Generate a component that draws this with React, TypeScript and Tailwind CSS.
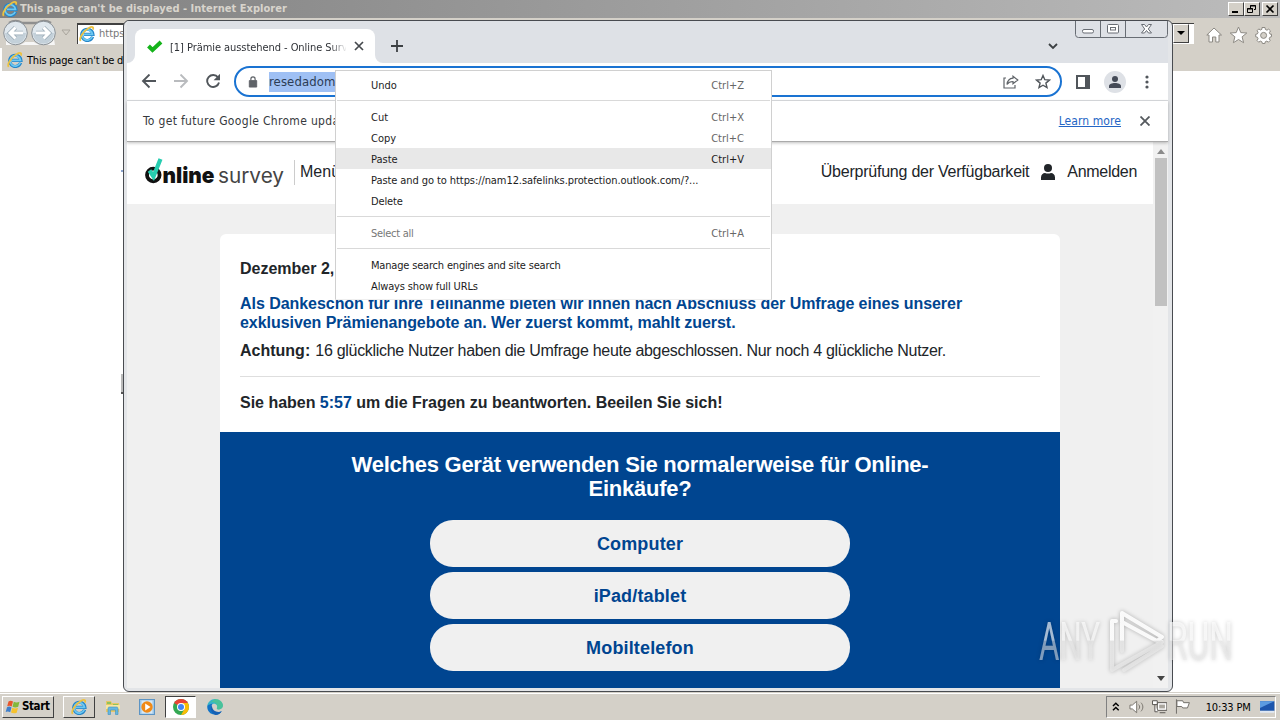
import React from 'react';

interface IconProps {
  className?: string;
}

interface MenuEntry {
  label: string;
  shortcut?: string;
  active?: boolean;
  disabled?: boolean;
  tracking?: string;
}

const MENU_GROUPS: MenuEntry[][] = [
  [{ label: 'Undo', shortcut: 'Ctrl+Z' }],
  [
    { label: 'Cut', shortcut: 'Ctrl+X' },
    { label: 'Copy', shortcut: 'Ctrl+C' },
    { label: 'Paste', shortcut: 'Ctrl+V', active: true },
    { label: 'Paste and go to https://nam12.safelinks.protection.outlook.com/?...', tracking: 'tracking-[-0.08px]' },
    { label: 'Delete', tracking: 'tracking-[-0.15px]' },
  ],
  [{ label: 'Select all', shortcut: 'Ctrl+A', disabled: true, tracking: 'tracking-[-0.28px]' }],
  [
    { label: 'Manage search engines and site search', tracking: 'tracking-[-0.18px]' },
    { label: 'Always show full URLs', tracking: 'tracking-[-0.14px]' },
  ],
];

const ANSWERS = ['Computer', 'iPad/tablet', 'Mobiltelefon'];

const IeLogo: React.FC<IconProps> = ({ className = '' }) => (
  <svg viewBox="0 0 16 16" className={className} fill="none">
    <path d="M13.6 10.8A5.6 5.6 0 1 1 13.9 8.3H5" stroke="#2585c8" strokeWidth="3.2" />
    <path d="M13.2 10.8A5.2 5.2 0 1 1 13.5 8.3H5" stroke="#6cc8f2" strokeWidth="1.8" />
    <path d="M1.7 14.8C-.3 12.5 4 5.4 9.8 2c3.6-2 5.2-.9 4 1.7" stroke="#edc240" strokeWidth="1.8" />
  </svg>
);

const ChromeLogo: React.FC<IconProps> = ({ className = '' }) => (
  <svg viewBox="0 0 16 16" className={className}>
    <circle cx="8" cy="8" r="8" fill="#34a853" />
    <path d="M8 8 1.1 4A8 8 0 0 1 14.9 4Z" fill="#ea4335" />
    <path d="M8 4h6.9A8 8 0 0 1 8 16l3.5-6Z" fill="#fbbc05" />
    <circle cx="8" cy="8" r="4" fill="#fff" />
    <circle cx="8" cy="8" r="3" fill="#4285f4" />
  </svg>
);

const EdgeLogo: React.FC<IconProps> = ({ className = '' }) => (
  <svg viewBox="0 0 16 16" className={className}>
    <path d="M.2 7.5C.5 3.2 4 0 8 0c4.500 0 8 3.200 8 6.600 0 2.300-1.800 3.900-4 3.900-1.600 0-2.600-.7-2.100-1.500.9-1.800-.2-4.200-3-4.200C3.700 4.800 1 6 .2 7.500Z" fill="#36b5c8" />
    <path d="M8 0c4.500 0 8 3.200 8 6.600 0 2.300-1.800 3.900-4 3.900-1.600 0-2.600-.7-2.100-1.500C11.500 5.400 8 2.500 4 3Z" fill="#5bd06d" opacity=".5" />
    <path d="M.2 7.500C1 5.500 3.500 4.500 6 4.800 4 6 4 9 5.500 11c2 2.500 6 2.700 9.300 1.200A8 8 0 0 1 .2 7.500Z" fill="#1273c7" />
    <path d="M5 6c-2 2.500-1.500 7.500 3.500 10 2.500 0 5-1.500 6.300-3.800C11 14 4.500 12.500 5 6Z" fill="#1560b4" />
  </svg>
);

const FolderIcon: React.FC<IconProps> = ({ className = '' }) => (
  <svg viewBox="0 0 16 16" className={className}>
    <path d="M1 2h5l1 2h7v9H1Z" fill="#e7c765" />
    <path d="M2 3h4v2H2ZM8 5h5v2H8Z" fill="#8fc35c" />
    <path d="M1 6h14v4H1Z" fill="#f7e7a2" />
    <path d="M3 15.500V9.500C3 8 4 8 5 8h6c1 0 2 0 2 1.500v6h-2.500V11h-5v4.500Z" fill="#67b7df" stroke="#3d91c0" strokeWidth=".6" />
  </svg>
);

const PlayerIcon: React.FC<IconProps> = ({ className = '' }) => (
  <svg viewBox="0 0 16 16" className={className}>
    <rect x=".5" y=".5" width="15" height="15" fill="#9cc7e8" stroke="#5c94c4" />
    <rect x="2.500" y="1.500" width="11" height="13" fill="#d6e8f5" />
    <circle cx="8" cy="8" r="5.700" fill="#f08a17" />
    <path d="M6.200 4.600 11.500 8l-5.300 3.400Z" fill="#fff" />
  </svg>
);

const WindowsFlag: React.FC<IconProps> = ({ className = '' }) => (
  <svg viewBox="0 0 16 14" className={className}>
    <path d="M3.500 1.500C5 .5 6.500.7 8 1.500L6.700 6.500C5.200 5.600 3.700 5.500 2.200 6.300Z" fill="#e8562b" />
    <path d="M8.800 1.800c1.700.8 3.500 1 5.700 0l-1.300 5c-2 .9-3.900.8-5.700 0Z" fill="#83b83b" />
    <path d="M2 7.200c1.500-.9 3-.8 4.500.2L5.200 12.300C3.700 11.300 2.200 11.200.7 12Z" fill="#3f7fcb" />
    <path d="M7.300 7.700c1.700.9 3.500 1 5.700.1l-1.300 4.900c-2 .9-3.900.8-5.700-.1Z" fill="#f6c22d" />
  </svg>
);

const IeWindow = () => (
  <div className="flex h-[692px] flex-col bg-white">
    <div className="flex h-[18px] items-center justify-between bg-gradient-to-r from-[#808080] to-[#bcbcbc] px-[2px]">
      <div className="flex items-center gap-[2px]">
        <IeLogo className="size-4" />
        <span className="pt-px text-[11px] font-bold tracking-[0.02px] text-[#d8d4cc]">This page can't be displayed - Internet Explorer</span>
      </div>
      <div className="flex">
        {['min', 'restore', 'close'].map((kind) => (
          <div
            key={kind}
            className={`flex h-[14px] w-4 items-center justify-center border border-t-white border-r-[#404040] border-b-[#404040] border-l-white bg-[#d4d0c8] ${kind === 'close' ? 'ml-[2px]' : ''}`}
          >
            <svg viewBox="0 0 12 10" className="h-[10px] w-3" fill="none" stroke="#000">
              {kind === 'min' && <path d="M2 8h6" strokeWidth="2" />}
              {kind === 'restore' && <path d="M4.500 4V1.500h5v4H8M1.500 4.500h5v4h-5ZM4 2h6M1 5h6" />}
              {kind === 'close' && <path d="m2.500 1.500 7 7m0-7-7 7" strokeWidth="1.700" />}
            </svg>
          </div>
        ))}
      </div>
    </div>
    <div className="flex h-[30px] items-center justify-between bg-[#d4d0c8] pl-[2px]">
      <div className="flex items-center">
        <svg viewBox="0 0 56 28" className="h-7 w-14" fill="none">
          <path d="M7 4C12 1 17 2 20 4h15c4-2 9-3 14 0" stroke="#8f8f8f" strokeWidth="2.500" />
          <path d="M4 20c2 6 14 8 19 3h9c6 5 18 3 20-3l1 6H4Z" fill="#f6f6f6" />
          <circle cx="13.500" cy="14" r="11.800" fill="#dfe7ed" stroke="#8a9197" />
          <circle cx="41.500" cy="14" r="11.800" fill="#dfe7ed" stroke="#8a9197" />
          <path d="M3 14a10.500 10.500 0 0 0 21 0ZM31 14a10.500 10.500 0 0 0 21 0Z" fill="#c3d0d9" />
          <path d="M21 14H7.500m6-5.500L8 14l5.500 5.500M34 14h13.500m-6-5.500L47 14l-5.500 5.500" stroke="#9aabb6" strokeWidth="4.500" />
          <path d="M21 14H7.500m6-5.500L8 14l5.500 5.500M34 14h13.500m-6-5.500L47 14l-5.500 5.500" stroke="#fff" strokeWidth="3" />
        </svg>
        <svg viewBox="0 0 10 8" className="mr-[6px] ml-[3px] h-2 w-[10px]">
          <path d="M1 1h8L5 6Z" fill="#d4d0c8" stroke="#aaa69e" />
        </svg>
        <div className="flex h-[21px] w-[120px] items-center gap-1 border-t-2 border-l border-[#404040] bg-white pl-px">
          <IeLogo className="size-4" />
          <span className="text-[11px] text-[#777]">https</span>
        </div>
      </div>
      <div className="flex items-center pr-2">
        <div className="mr-[12px] flex h-[21px] w-6 items-center border-y border-t-[#404040] border-b-white bg-white">
          <div className="ml-[3px] flex h-[19px] w-4 items-center justify-center border border-t-white border-r-[#404040] border-b-[#404040] border-l-white bg-[#d4d0c8]">
            <svg viewBox="0 0 8 4" className="h-1 w-2"><path d="M0 0h8L4 4Z" /></svg>
          </div>
        </div>
        <svg viewBox="0 0 66 18" className="mt-1 h-[18px] w-[66px]" fill="#fff" stroke="#8c8983" strokeWidth="1">
          <path d="m8 2 7.500 7H13v7H9.800v-5H6.500v5H3V9H.8ZM32.500 1l2.300 5.600 6 .4-4.700 3.800 1.500 5.900-5.100-3.200-5.100 3.200 1.500-5.900L24.200 7l6-.4Z" />
          <path d="M56 1.500h3l.4 2 1.600.7 1.700-1.100 1.800 1.800-1.100 1.700.7 1.600h1.400v2.500l-1.600.5-.7 1.600 1 1.600-1.800 1.800-1.600-1.100-1.600.7-.3 1.700h-2.500l-.5-1.700-1.500-.7-1.700 1.100-1.700-1.800 1.100-1.600-.7-1.600-1.700-.4V8.300l1.700-.4.7-1.600-1-1.600 1.700-1.800 1.600 1.100 1.500-.7Z" />
          <circle cx="57.600" cy="9.400" r="3" fill="#d4d0c8" />
        </svg>
      </div>
    </div>
    <div className="flex h-[23px] items-center gap-1 border-l-2 border-white bg-[#d4d0c8] pl-[5px]">
      <IeLogo className="size-4" />
      <span className="pt-[3px] text-[11px] tracking-[-0.22px]">This page can't be displayed</span>
    </div>
    <div className="flex flex-1 flex-col items-start pl-[121px]">
      <div className="mt-[99px] h-[2px] w-1 bg-[#8ca5d0]" />
      <div className="mt-[202px] h-5 w-1 border-b-2 border-[#555] bg-[#bbb]" />
    </div>
  </div>
);

const CaptionButtons = () => (
  <svg viewBox="0 0 94 18" className="h-[18px] w-[94px]" fill="none" stroke="#686d74">
    <path d="M.5 0v13.500a3 3 0 0 0 3 3h86a3 3 0 0 0 3-3V0M25.500 0v16M50.500 0v16" />
    <rect x="7.500" y="8.500" width="11" height="3.500" rx="1.500" fill="#fff" />
    <rect x="32.500" y="3.500" width="11" height="8.500" rx="1" fill="#fff" />
    <rect x="35.500" y="6.500" width="5" height="2.500" />
    <path d="M66.500 3.500h3l2 2.500 2-2.500h3L73.300 8l3.200 4h-3l-2-2.500-2 2.500h-3L69.700 8Z" fill="#fff" />
  </svg>
);

const TabStrip = () => (
  <div className="flex h-[42px] justify-between bg-[#dee1e6]">
    <div className="flex items-end">
      <svg viewBox="0 0 8 8" className="size-2"><path d="M8 0v8H0a8 8 0 0 0 8-8Z" fill="#fff" /></svg>
      <div className="flex h-[34px] w-[240px] items-center rounded-t-lg bg-white pl-3">
        <svg viewBox="0 0 16 14" className="h-[14px] w-4" fill="none">
          <path d="m1.500 7 4 4L14 3" stroke="#15b31b" strokeWidth="4" />
        </svg>
        <div className="ml-[7px] w-[176px] overflow-hidden whitespace-nowrap [mask-image:linear-gradient(to_right,black_160px,transparent_177px)]">
          <span className="text-[11px] tracking-[-0.06px] text-[#303338]">[1] Prämie ausstehend - Online Survey</span>
        </div>
        <svg viewBox="0 0 10 10" className="ml-2 size-[10px]" stroke="#45494d" strokeWidth="1.700"><path d="m1 1 8 8m0-8L1 9" /></svg>
      </div>
      <svg viewBox="0 0 8 8" className="size-2"><path d="M0 0v8h8a8 8 0 0 1-8-8Z" fill="#fff" /></svg>
      <svg viewBox="0 0 12 12" className="mb-[11px] ml-2 size-3" stroke="#3c4043" strokeWidth="1.800"><path d="M6 0v12M0 6h12" /></svg>
    </div>
    <div className="-mr-px flex">
      <svg viewBox="0 0 10 7" className="mt-[22px] mr-[17px] h-[7px] w-[10px]" fill="none" stroke="#3c4043" strokeWidth="1.800"><path d="m1 1 4 4 4-4" /></svg>
      <CaptionButtons />
    </div>
  </div>
);

const AddressBar = () => (
  <div className="flex h-[38px] items-center border-b border-[#dcdee1] bg-white pl-[14px]">
    <svg viewBox="0 0 16 16" className="size-4" fill="none" stroke="#51565b" strokeWidth="1.900"><path d="M15 7H2m6.500-6.500L2 7l6.500 6.500" /></svg>
    <svg viewBox="0 0 16 16" className="ml-4 size-4" fill="none" stroke="#b9bbbe" strokeWidth="1.900"><path d="M1 7h13M7.500.5 14 7l-6.500 6.500" /></svg>
    <svg viewBox="0 1 16 16" className="ml-4 size-4" fill="none" stroke="#51565b" strokeWidth="1.900">
      <path d="M13 4.400A6 6 0 1 0 14 9.500" />
      <path d="M15 .8v6.400H8.600Z" fill="#51565b" stroke="none" />
    </svg>
    <div className="ml-[13px] flex h-[31px] w-[828px] items-center rounded-full border-2 border-[#1a73d2] bg-white pr-[9px] pl-3">
      <svg viewBox="0 0 10 13" className="h-3 w-[10px]"><path d="M1 5h8v7H1Z" fill="#5f6368" stroke="#5f6368" strokeLinejoin="round" /><path d="M2.700 5V3.200a2.300 2.300 0 0 1 4.600 0V5" fill="none" stroke="#5f6368" strokeWidth="1.300" /></svg>
      <span className="ml-[11px] h-5 bg-[#9fc0f4] text-[13px] leading-5 tracking-[0.1px] text-[#2c3c55]">resedadomain</span>
      <div className="ml-auto flex items-center gap-4">
        <svg viewBox="0 0 16 14" className="h-[14px] w-4" fill="none" stroke="#5f6368" strokeWidth="1.200">
          <path d="M3 3H1v10h11v-3" />
          <path d="M10 1.200 14.800 5 10 8.800V6.500C7 6.500 5.300 7.500 4 9.500c.4-3.500 2.500-6 6-6.300Z" />
        </svg>
        <svg viewBox="0 0 16 16" className="size-4" fill="none" stroke="#51565b" strokeWidth="1.400"><path d="m8 1.500 1.800 4.200 4.600.4-3.500 3 1.100 4.500L8 11.200l-4 2.400 1.100-4.500-3.500-3 4.600-.4Z" /></svg>
      </div>
    </div>
    <svg viewBox="0 0 14 14" className="ml-[14px] size-[14px]"><path d="M1 1h12v12H1Z" fill="none" stroke="#51565b" strokeWidth="2" /><path d="M9 1h4v12H9Z" fill="#51565b" /></svg>
    <div className="ml-[14px] flex size-[22px] items-center justify-center rounded-full bg-[#dee1e6]">
      <svg viewBox="0 0 12 12" className="size-3" fill="#454b57"><circle cx="6" cy="3" r="3" /><path d="M0 12V10c0-2 3-3 6-3s6 1 6 3v2Z" /></svg>
    </div>
    <svg viewBox="0 0 4 14" className="ml-[19px] h-[14px] w-1" fill="#51565b"><circle cx="2" cy="2" r="1.600" /><circle cx="2" cy="7" r="1.600" /><circle cx="2" cy="12" r="1.600" /></svg>
  </div>
);

const InfoBar = () => (
  <div className="relative z-10 flex h-[41px] items-center justify-between border-b border-[#aaa] bg-white pr-[18px] pl-4 shadow-[0_1px_3px_rgba(0,0,0,0.25)]">
    <span className="text-[12px] tracking-[0.32px] text-[#36393d]">To get future Google Chrome updates</span>
    <div className="flex items-center gap-[19px]">
      <span className="text-[12px] tracking-[0.08px] text-[#2465c5] underline">Learn more</span>
      <svg viewBox="0 0 10 10" className="size-[10px]" stroke="#55595e" strokeWidth="1.800"><path d="m.5.5 9 9m0-9-9 9" /></svg>
    </div>
  </div>
);

const SurveyLogo = () => (
  <svg viewBox="0 0 141 32" className="h-8 w-[141px]">
    <circle cx="9.300" cy="19" r="6.300" fill="#fff" stroke="#111" strokeWidth="3.800" />
    <path d="M13 10 17 2" stroke="#fff" strokeWidth="7" />
    <path d="m5.500 14.500 4 6L16.500 3" fill="none" stroke="#27cdb0" strokeWidth="4.200" />
    <text x="18.500" y="26.500" textLength="52" lengthAdjust="spacingAndGlyphs" fontFamily="Inter" fontWeight="900" fontSize="22" fill="#111">nline</text>
    <text x="74" y="26.500" textLength="66" lengthAdjust="spacingAndGlyphs" fontFamily="Inter" fontWeight="400" fontSize="20.500" fill="#444">survey</text>
  </svg>
);

const SurveyPage = () => (
  <div className="flex h-[546px] bg-[#f0f0f0] font-['Liberation_Sans',sans-serif] text-[16px] text-[#212529]">
    <div className="flex flex-1 flex-col overflow-hidden">
      <div className="flex h-[62px] shrink-0 items-center justify-between bg-white pr-4 pb-[2px] pl-[17px]">
        <div className="flex items-center">
          <SurveyLogo />
          <div className="ml-[9px] h-[25px] w-px bg-[#ccc]" />
          <span className="ml-[5px] whitespace-nowrap">Menü</span>
        </div>
        <div className="flex items-center">
          <span className="tracking-[-0.23px]">Überprüfung der Verfügbarkeit</span>
          <svg viewBox="0 0 14 16" className="mr-3 ml-3 h-4 w-[14px]" fill="#212529"><circle cx="7" cy="4" r="4" /><path d="M0 16v-2.500C0 10.500 2 9 4 9c2 .7 4 .7 6 0 2 0 4 1.500 4 4.500V16Z" /></svg>
          <span className="tracking-[-0.3px]">Anmelden</span>
        </div>
      </div>
      <div className="mt-[30px] ml-[93px] w-[840px] flex-1 overflow-hidden rounded-t-md bg-white">
        <div className="flex h-[198px] flex-col px-5 leading-[19px]">
          <p className="mt-[25px] font-bold">Dezember 2, 2022</p>
          <p className="mt-4 font-bold tracking-[-0.048px] whitespace-nowrap text-[#004590]">
            Als Dankeschön für Ihre Teilnahme bieten wir Ihnen nach Abschluss der Umfrage eines unserer
            <br />
            exklusiven Prämienangebote an. Wer zuerst kommt, mahlt zuerst.
          </p>
          <p className="mt-[9px] tracking-[-0.3px] whitespace-nowrap">
            <b className="mr-px tracking-normal">Achtung:</b> 16 glückliche Nutzer haben die Umfrage heute abgeschlossen. Nur noch 4 glückliche Nutzer.
          </p>
          <div className="mt-4 h-px bg-[#dedede]" />
          <p className="mt-4 font-bold tracking-[-0.02px] whitespace-nowrap">
            Sie haben <span className="text-[#004590]">5:57</span> um die Fragen zu beantworten. Beeilen Sie sich!
          </p>
        </div>
        <div className="flex h-[260px] flex-col items-center bg-[#004590] pt-[21px]">
          <h1 className="text-center text-[22px] leading-6 font-bold tracking-[-0.25px] text-white">
            Welches Gerät verwenden Sie normalerweise für Online-
            <br />
            Einkäufe?
          </h1>
          <div className="mt-[19px] flex w-[420px] flex-col gap-[5px]">
            {ANSWERS.map((answer) => (
              <div key={answer} className="flex h-[47px] items-center justify-center rounded-[23px] bg-[#f0f0f0] pt-px text-[18px] font-bold tracking-[0.15px] text-[#004590]">
                {answer}
              </div>
            ))}
          </div>
        </div>
      </div>
    </div>
    <div className="flex w-[15px] flex-col items-center bg-[#f1f1f1]">
      <svg viewBox="0 0 8 5" className="mt-[7px] h-[5px] w-2" fill="#8b8b8b"><path d="M4 0 8 5H0Z" /></svg>
      <div className="mt-1 h-[148px] w-3 bg-[#c1c1c1]" />
      <svg viewBox="0 0 8 5" className="mt-auto mb-[7px] h-[5px] w-2" fill="#444"><path d="M0 0h8L4 5Z" /></svg>
    </div>
  </div>
);

const ContextMenu = () => (
  <div className="absolute top-[70px] left-[335px] z-20 h-[230px] w-[437px] border border-[#d0d0d0] border-b-[#eee] bg-white pt-[3px] text-[11px] text-[#1c1c1c]">
    {MENU_GROUPS.map((group, index) => (
      <div key={index}>
        {index > 0 && <div className="mx-px my-[5px] h-px bg-[#d9d9d9]" />}
        {group.map((entry) => (
          <div
            key={entry.label}
            className={`flex h-[21px] items-center justify-between pt-[3px] pr-[27px] pl-[35px] whitespace-nowrap ${entry.active ? 'bg-[#e8e8e8]' : ''} ${entry.disabled ? 'text-[#777]' : ''}`}
          >
            <span className={entry.tracking}>{entry.label}</span>
            <span className={entry.active ? '' : 'text-[#666]'}>{entry.shortcut}</span>
          </div>
        ))}
      </div>
    ))}
  </div>
);

const Watermark = () => (
  <svg viewBox="0 0 210 76" className="absolute top-[602px] left-[1030px] z-30 h-[76px] w-[210px] drop-shadow-[0_0_2px_rgba(0,0,0,0.3)]">
    <defs>
      <linearGradient id="fade" gradientUnits="userSpaceOnUse" x1="0" y1="0" x2="0" y2="76">
        <stop offset=".5" stopColor="#fff" stopOpacity=".9" />
        <stop offset=".52" stopColor="#e9e9e9" stopOpacity=".75" />
      </linearGradient>
      <linearGradient id="fade-text" gradientUnits="userSpaceOnUse" x1="0" y1="0" x2="0" y2="76">
        <stop offset=".5" stopColor="#fff" stopOpacity=".65" />
        <stop offset=".52" stopColor="#e9e9e9" stopOpacity=".55" />
      </linearGradient>
    </defs>
    <g fill="none" stroke="url(#fade)" strokeWidth="4" strokeLinejoin="round" strokeLinecap="round">
      <path d="M92 49V11l40 24-5 4-35-19" />
      <path d="M86 19h-4v49l50-28M94 68l38-24" />
    </g>
    <g fontFamily="Roboto" fontSize="53" fontWeight="400" fill="url(#fade-text)">
      <text x="9" y="58" textLength="61" lengthAdjust="spacingAndGlyphs">ANY</text>
      <text x="137" y="58" textLength="66" lengthAdjust="spacingAndGlyphs">RUN</text>
    </g>
  </svg>
);

const Taskbar = () => (
  <div className="flex h-7 items-center justify-between border-t border-[#d4d0c8] bg-[#d4d0c8] pr-1 pl-[2px] shadow-[inset_0_1px_0_#fff]">
    <div className="flex items-center">
      <div className="flex h-[22px] w-[52px] items-center gap-px border border-t-white border-r-[#404040] border-b-[#404040] border-l-white pl-[2px]">
        <WindowsFlag className="h-[14px] w-4 shrink-0" />
        <span className="pt-px text-[11.500px] font-bold tracking-[-0.4px] text-black">Start</span>
      </div>
      <div className="ml-[9px] flex h-[22px] w-8 items-center justify-center border border-t-white border-r-[#404040] border-b-[#404040] border-l-white">
        <IeLogo className="size-4" />
      </div>
      <FolderIcon className="ml-[10px] size-4" />
      <PlayerIcon className="ml-[18px] size-4" />
      <div className="ml-[10px] flex h-[22px] w-[31px] items-center justify-center border border-t-[#404040] border-r-white border-b-white border-l-[#404040] bg-white">
        <ChromeLogo className="size-4" />
      </div>
      <EdgeLogo className="ml-[11px] size-4" />
    </div>
    <div className="flex h-[22px] w-[170px] items-center border border-t-[#808080] border-r-white border-b-white border-l-[#808080] pl-[5px]">
      <svg viewBox="0 0 8 10" className="h-[10px] w-2" fill="none" stroke="#000" strokeWidth="1.500"><path d="m1 4 3-3 3 3M1 8.500l3-3 3 3" /></svg>
      <svg viewBox="0 0 16 14" className="ml-[9px] h-[14px] w-4" fill="#fff" stroke="#77736c"><path d="M1 5h2.500L8 1v12L3.500 9H1Z" /><path d="M10 4.500c1.500 1.500 1.500 3.500 0 5M12.500 2.500c2.600 2.700 2.600 6.300 0 9" fill="none" /></svg>
      <svg viewBox="0 0 16 15" className="ml-2 h-[15px] w-4" fill="#fff" stroke="#56534e"><path d="M5.500 3.500h10v8h-10ZM8 14h6" /><path d="M7.500 5.500h6v4h-6Z" fill="#aaa69e" stroke="none" /><path d="M.5 1.500h5v4h-5ZM3 5.500V13h3" /></svg>
      <svg viewBox="0 0 16 15" className="ml-2 h-[15px] w-4" fill="#fff" stroke="#6e6b65"><path d="M1.500 0v15" /><path d="M2 1.500h6l1 2h6l-2 5.500H8L7 7.500H2Z" /></svg>
      <span className="ml-[15px] w-[46px] pt-[3px] text-[11px] tracking-[-0.15px] whitespace-nowrap text-black">10:33 PM</span>
      <svg viewBox="0 0 16 12" className="ml-[9px] h-3 w-4"><path d="M0 0h15v10H0Z" fill="#1d56ad" /><path d="M0 0h15L0 7Z" fill="#5c9ce2" /><path d="M0 10h15v2H0Z" fill="#dfe8f3" /></svg>
    </div>
  </div>
);

const App: React.FC = () => (
  <div className="relative h-[720px] w-[1280px] overflow-hidden font-['DejaVu_Sans_Condensed','DejaVu_Sans',sans-serif] text-black">
    <IeWindow />
    <Taskbar />
    <div className="absolute top-[20px] left-[123px] h-[672px] w-[1050px] overflow-hidden rounded-md border border-[#484b50] bg-[#e3e5e8] pr-1 pl-[3px]">
      <TabStrip />
      <AddressBar />
      <InfoBar />
      <SurveyPage />
    </div>
    <ContextMenu />
    <Watermark />
  </div>
);

export default App;
